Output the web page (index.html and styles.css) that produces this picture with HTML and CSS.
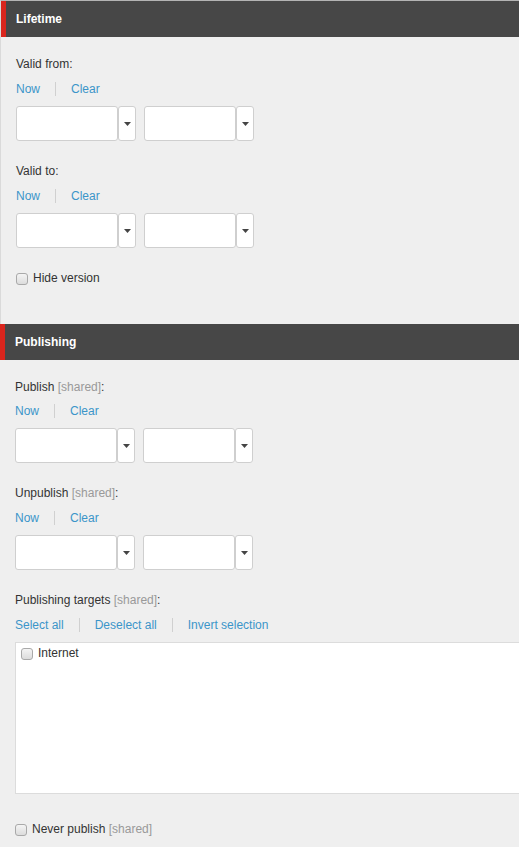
FILE: index.html
```html
<!DOCTYPE html>
<html>
<head>
<meta charset="utf-8">
<link rel="stylesheet" href="styles.css">
</head>
<body>
<section class="panel panel-first">
  <div class="panel-head">Lifetime</div>
  <div class="panel-body">
    <div class="field">
      <div class="label">Valid from:</div>
      <div class="links"><a>Now</a><span class="sep"></span><a>Clear</a></div>
      <div class="dt">
        <span class="box date"></span><span class="btn"><svg width="7" height="4" viewBox="0 0 7 4"><polygon points="0,0 7,0 3.5,4" fill="#444"/></svg></span>
        <span class="box time"></span><span class="btn"><svg width="7" height="4" viewBox="0 0 7 4"><polygon points="0,0 7,0 3.5,4" fill="#444"/></svg></span>
      </div>
    </div>
    <div class="field">
      <div class="label">Valid to:</div>
      <div class="links"><a>Now</a><span class="sep"></span><a>Clear</a></div>
      <div class="dt">
        <span class="box date"></span><span class="btn"><svg width="7" height="4" viewBox="0 0 7 4"><polygon points="0,0 7,0 3.5,4" fill="#444"/></svg></span>
        <span class="box time"></span><span class="btn"><svg width="7" height="4" viewBox="0 0 7 4"><polygon points="0,0 7,0 3.5,4" fill="#444"/></svg></span>
      </div>
    </div>
    <div class="check-row"><span class="cb"></span><span class="label">Hide version</span></div>
  </div>
</section>
<section class="panel panel-second">
  <div class="panel-head">Publishing</div>
  <div class="panel-body">
    <div class="field field-first">
      <div class="label">Publish <span class="shared">[shared]</span>:</div>
      <div class="links"><a>Now</a><span class="sep"></span><a>Clear</a></div>
      <div class="dt">
        <span class="box date"></span><span class="btn"><svg width="7" height="4" viewBox="0 0 7 4"><polygon points="0,0 7,0 3.5,4" fill="#444"/></svg></span>
        <span class="box time"></span><span class="btn"><svg width="7" height="4" viewBox="0 0 7 4"><polygon points="0,0 7,0 3.5,4" fill="#444"/></svg></span>
      </div>
    </div>
    <div class="field">
      <div class="label">Unpublish <span class="shared">[shared]</span>:</div>
      <div class="links"><a>Now</a><span class="sep"></span><a>Clear</a></div>
      <div class="dt">
        <span class="box date"></span><span class="btn"><svg width="7" height="4" viewBox="0 0 7 4"><polygon points="0,0 7,0 3.5,4" fill="#444"/></svg></span>
        <span class="box time"></span><span class="btn"><svg width="7" height="4" viewBox="0 0 7 4"><polygon points="0,0 7,0 3.5,4" fill="#444"/></svg></span>
      </div>
    </div>
    <div class="field">
      <div class="label">Publishing targets <span class="shared">[shared]</span>:</div>
      <div class="links"><a>Select all</a><span class="sep"></span><a>Deselect all</a><span class="sep"></span><a>Invert selection</a></div>
      <div class="list">
        <div class="check-row list-item"><span class="cb"></span><span class="label">Internet</span></div>
      </div>
    </div>
    <div class="check-row never"><span class="cb"></span><span class="label">Never publish <span class="shared">[shared]</span></span></div>
  </div>
</section>
</body>
</html>
```
FILE: styles.css
```css
html, body {
  margin: 0;
  padding: 0;
  overflow: hidden;
}
body {
  background: #efefef;
  font-family: Arial, "Liberation Sans", sans-serif;
  font-size: 12px;
  color: #333;
  width: 519px;
}
.panel-first {
  border-top: 1px solid #b4b4b4;
  border-left: 1px solid #dadada;
}
.panel-head {
  height: 36px;
  line-height: 36px;
  background: #474747;
  border-left: 5px solid #d9251d;
  padding-left: 10px;
  color: #fff;
  font-weight: bold;
}
.panel-body {
  padding: 19px 0 37px 15px;
  display: flex;
  flex-direction: column;
  gap: 22px;
}
.panel-second .panel-body {
  padding-bottom: 12px;
}
.field {
  display: flex;
  flex-direction: column;
}
.label {
  line-height: 17px;
  color: #333;
}
.shared {
  color: #999;
}
.links {
  display: flex;
  align-items: center;
  line-height: 16px;
  margin-top: 8px;
  margin-bottom: 9px;
}
.field-first .links {
  margin-top: 7px;
}
.links a {
  color: #3b95c9;
  cursor: pointer;
}
.sep {
  width: 1px;
  height: 14px;
  background: #d0d0d0;
  margin: 0 15px;
}
.dt {
  display: flex;
  height: 35px;
}
.box, .btn {
  box-sizing: border-box;
  height: 35px;
  background: #fff;
  border: 1px solid #cfcfcf;
  border-radius: 3px;
}
.date { width: 102px; }
.time { width: 92px; margin-left: 8px; }
.btn {
  width: 18px;
  display: flex;
  align-items: center;
  justify-content: center;
}
.btn svg { display: block; }
.check-row {
  display: flex;
  align-items: center;
  line-height: 17px;
}
.cb {
  box-sizing: border-box;
  width: 12px;
  height: 12px;
  border: 1px solid #a9a9a9;
  border-radius: 3px;
  background: linear-gradient(#f4f4f4, #dcdcdc);
  margin-right: 5px;
}
.list {
  box-sizing: border-box;
  width: 520px;
  height: 152px;
  background: #fff;
  border: 1px solid #dcdcdc;
  padding: 2px 5px;
}
.never {
  margin-top: 5px;
}
```
